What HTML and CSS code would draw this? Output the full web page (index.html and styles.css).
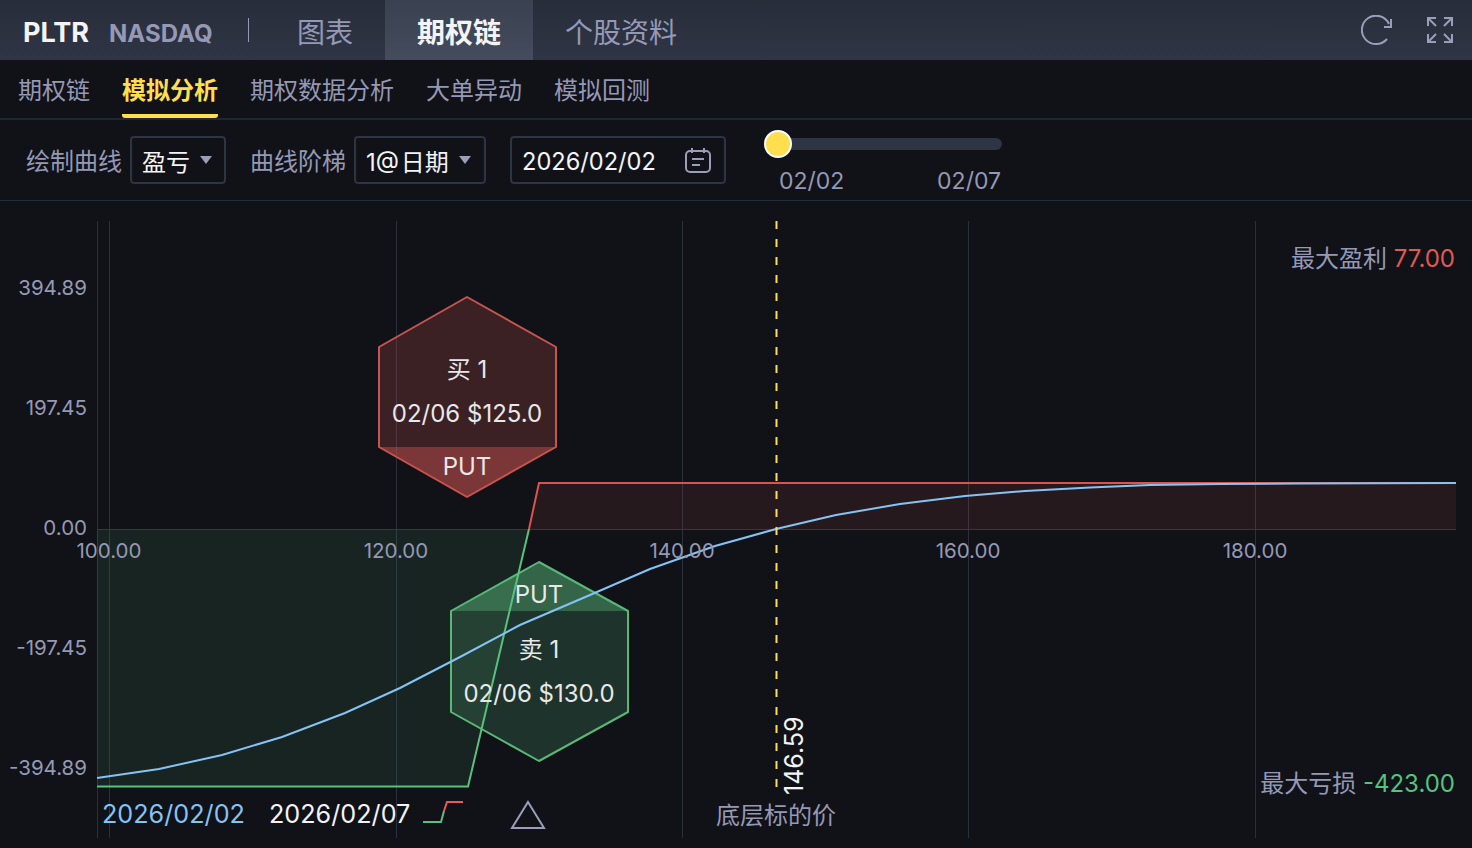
FILE: index.html
```html
<!doctype html>
<html lang="zh">
  <head>
    <meta charset="UTF-8" />
    <title>PLTR 模拟分析</title>
    <link rel="stylesheet" href="styles.css">
  </head>
  <body>
    <header class="topbar">
      <div class="brand">
        <span class="ticker">PLTR</span>
        <span class="market">NASDAQ</span>
      </div>
      <span class="divider"></span>
      <nav class="tabs">
        <a class="tab">图表</a>
        <a class="tab active">期权链</a>
        <a class="tab">个股资料</a>
      </nav>
      <div class="top-icons">
        <svg class="icon-refresh" width="32" height="32" viewBox="0 0 32 32">
          <path d="M26 24A14.2 14.2 0 1 1 28 9" />
          <path d="M30 4V12H23" />
        </svg>
        <svg class="icon-full" width="28" height="28" viewBox="0 0 28 28">
          <path d="M2 10V2H10M2 2L10 10" />
          <path d="M26 10V2H18M26 2L18 10" />
          <path d="M2 18V26H10M2 26L10 18" />
          <path d="M26 18V26H18M26 26L18 18" />
        </svg>
      </div>
    </header>

    <nav class="subnav">
      <a class="subtab">期权链</a>
      <a class="subtab active">模拟分析</a>
      <a class="subtab">期权数据分析</a>
      <a class="subtab">大单异动</a>
      <a class="subtab">模拟回测</a>
    </nav>

    <section class="toolbar">
      <label class="field-label">绘制曲线</label>
      <div class="select select-kind">盈亏<span class="caret"></span></div>
      <label class="field-label label-step">曲线阶梯</label>
      <div class="select select-step">1@ 日期<span class="caret"></span></div>
      <div class="select date-box">
        <span class="date-value">2026/02/02</span>
        <svg width="28" height="26" viewBox="0 0 28 26">
          <rect x="2" y="4" width="24" height="21" rx="4" />
          <path d="M8 1V6M20 1V6M8 12H20M8 18H16" />
        </svg>
      </div>
      <div class="slider">
        <div class="track"><span class="thumb"></span></div>
        <div class="slider-dates">
          <span>02/02</span>
          <span>02/07</span>
        </div>
      </div>
    </section>

    <svg class="chart" width="1472" height="647" viewBox="0 201 1472 647">
      <g class="grid">
        <path d="M97.500 221V838M109.500 221V838M396.500 221V838M682.500 221V838M968.500 221V838M1255.500 221V838" />
      </g>
      <path class="area-green" d="M97 529H529L468 786H97Z" />
      <path class="area-red" d="M529 529L539 483H1456V529Z" />
      <path class="zero" d="M97 529.500H1456" />

      <polygon class="hex-red" points="467,297 556,347 556,447 467,497 379,447 379,347" />
      <polygon class="cap-red" points="379,447 556,447 467,497" />
      <polygon class="hex-green" points="539,562 628,611 628,712 539,761 451,712 451,611" />
      <polygon class="cap-green" points="539,562 628,611 451,611" />

      <path class="line-green" d="M97 786.500H468L529 529" />
      <path class="line-red" d="M529 529L539 483H1456" />
      <path class="line-blue" d="M97 778L159 769L222 755L282 737L345 713L400 688L460 657L520 625L590 595L650 569L715 546L776 529L836 515L900 504L965 496L1025 491L1090 487.500L1150 485L1220 484L1300 483.500L1456 483" />
      <path class="price-line" d="M776.500 221V790" />

      <g class="axis-y">
        <text x="87" y="295">394.89</text>
        <text x="87" y="415">197.45</text>
        <text x="87" y="535">0.00</text>
        <text x="87" y="655">-197.45</text>
        <text x="87" y="775">-394.89</text>
      </g>
      <g class="axis-x">
        <text x="109" y="558">100.00</text>
        <text x="396" y="558">120.00</text>
        <text x="682" y="558">140.00</text>
        <text x="968" y="558">160.00</text>
        <text x="1255" y="558">180.00</text>
      </g>

      <g class="hex-text">
        <text x="467" y="378">买 1</text>
        <text x="467" y="422">02/06 $125.0</text>
        <text x="467" y="475">PUT</text>
        <text x="539" y="603">PUT</text>
        <text x="539" y="658">卖 1</text>
        <text x="539" y="702">02/06 $130.0</text>
      </g>

      <text class="stat" x="1455" y="267">最大盈利 <tspan class="red">77.00</tspan></text>
      <text class="stat" x="1455" y="792">最大亏损 <tspan class="green">-423.00</tspan></text>

      <text class="price-value" transform="translate(803 795) rotate(-90)">146.59</text>
      <text class="price-name" x="776" y="824">底层标的价</text>

      <text class="legend legend-blue" x="102" y="823">2026/02/02</text>
      <text class="legend" x="269" y="823">2026/02/07</text>
      <path class="key-green" d="M423 822H441L444 811" />
      <path class="key-red" d="M444 811L447 802H463" />
      <path class="key-triangle" d="M528 802L544 828H512Z" />
    </svg>
  </body>
</html>
```

FILE: styles.css
```css
* {
  box-sizing: border-box;
}
body {
  margin: 0;
  width: 1472px;
  height: 848px;
  overflow: hidden;
  background: #101218;
  color: #9599b5;
  font-family: Inter, "Noto Sans CJK SC", sans-serif;
}

.topbar {
  display: flex;
  align-items: center;
  height: 60px;
  background: linear-gradient(180deg, #282d3a, #2f3545);
}
.brand {
  display: flex;
  align-items: baseline;
  gap: 20px;
  width: 248px;
  padding-top: 4px;
  padding-left: 23px;
  font-weight: 700;
}
.ticker {
  color: #f4f4f6;
  font-size: 27px;
}
.market {
  font-size: 24px;
}
.divider {
  width: 1px;
  height: 24px;
  margin-right: 16px;
  background: #9599b5;
}
.tabs {
  display: flex;
  height: 100%;
}
.tab {
  display: flex;
  align-items: center;
  padding: 2px 32px 0;
  font-size: 28px;
}
.tab.active {
  background: linear-gradient(180deg, #3a4150, #444c5d);
  color: #f4f4f6;
  font-weight: 700;
}
.top-icons {
  display: flex;
  align-items: center;
  gap: 33px;
  margin-left: auto;
  margin-right: 18px;
}
.top-icons svg {
  fill: none;
  stroke: #9a9eb8;
  stroke-width: 2;
}
.icon-refresh {
  margin-top: 2px;
}
.icon-full {
  margin-top: -1px;
}

.subnav {
  display: flex;
  gap: 32px;
  height: 60px;
  padding-left: 18px;
  border-bottom: 2px solid #1e2630;
}
.subtab {
  height: 58px;
  padding-top: 14px;
  font-size: 24px;
  line-height: 34px;
}
.subtab.active {
  color: #ffdf4d;
  font-weight: 700;
  border-bottom: 4px solid #ffdf4d;
  border-radius: 0 0 3px 3px;
}

.toolbar {
  display: flex;
  align-items: center;
  height: 81px;
  padding-left: 26px;
  border-bottom: 1px solid #252d39;
}
.field-label {
  margin-top: -2px;
  font-size: 24px;
}
.select {
  display: flex;
  align-items: center;
  height: 48px;
  padding-left: 10px;
  border: 2px solid #2d3442;
  border-radius: 4px;
  color: #f4f4f6;
  font-size: 24px;
}
.select-kind {
  width: 96px;
  margin-left: 8px;
}
.label-step {
  margin-left: 24px;
}
.select-step {
  width: 132px;
  margin-left: 8px;
  word-spacing: -5px;
}
.caret {
  width: 0;
  height: 0;
  margin-left: 10px;
  border-left: 6.500px solid transparent;
  border-right: 6.500px solid transparent;
  border-top: 8px solid #9a9eb8;
}
.date-box {
  justify-content: space-between;
  width: 216px;
  margin-left: 24px;
  padding-right: 12px;
  font-size: 23.600px;
}
.date-value {
  padding-top: 2px;
}
.date-box svg {
  fill: none;
  stroke: #9a9eb8;
  stroke-width: 2;
}
.slider {
  align-self: flex-start;
  width: 238px;
  margin-left: 38px;
  padding-top: 18px;
}
.track {
  position: relative;
  height: 12px;
  margin-left: 14px;
  border-radius: 6px;
  background: #2d3444;
}
.thumb {
  position: absolute;
  left: -14px;
  top: -8px;
  width: 28px;
  height: 28px;
  border: 2px solid #fff;
  border-radius: 50%;
  background: #ffdf4d;
}
.slider-dates {
  display: flex;
  justify-content: space-between;
  padding: 15px 1px 0 15px;
  font-size: 23px;
  line-height: 32px;
}

.chart {
  display: block;
}
.chart text {
  font-family: Inter, "Noto Sans CJK SC", sans-serif;
}
.grid path {
  fill: none;
  stroke: #2a303b;
}
.zero {
  fill: none;
  stroke: #343a44;
}
.area-green {
  fill: rgba(89, 184, 120, 0.11);
}
.area-red {
  fill: rgba(217, 83, 79, 0.11);
}
.hex-red {
  fill: rgba(201, 84, 79, 0.23);
  stroke: #c9544f;
  stroke-width: 2;
  stroke-linejoin: round;
}
.cap-red {
  fill: rgba(201, 84, 79, 0.45);
}
.hex-green {
  fill: rgba(89, 184, 120, 0.2);
  stroke: #59b878;
  stroke-width: 2;
  stroke-linejoin: round;
}
.cap-green {
  fill: rgba(89, 184, 120, 0.38);
}
.line-green,
.line-red,
.line-blue {
  fill: none;
  stroke-width: 2;
}
.line-green {
  stroke: #59c17e;
}
.line-red {
  stroke: #d9534f;
}
.line-blue {
  stroke: #85c3f5;
}
.price-line {
  fill: none;
  stroke: #ffdf4d;
  stroke-width: 2;
  stroke-dasharray: 8 10;
}
.axis-y text {
  fill: #9599b5;
  font-size: 20.500px;
  text-anchor: end;
}
.axis-x text {
  fill: #9599b5;
  font-size: 20.500px;
  text-anchor: middle;
}
.hex-text text {
  fill: #e8e8e8;
  font-size: 24px;
  text-anchor: middle;
}
.stat {
  fill: #9599b5;
  font-size: 24px;
  text-anchor: end;
}
.stat .red {
  fill: #e05a52;
}
.stat .green {
  fill: #55c27e;
}
.price-value {
  fill: #f4f4f6;
  font-size: 25px;
}
.price-name {
  fill: #9599b5;
  font-size: 24px;
  text-anchor: middle;
}
.legend {
  fill: #f4f4f6;
  font-size: 25.200px;
}
.legend-blue {
  fill: #85c3f5;
}
.key-green,
.key-red {
  fill: none;
  stroke-width: 2;
}
.key-green {
  stroke: #59c17e;
}
.key-red {
  stroke: #e85a55;
}
.key-triangle {
  fill: none;
  stroke: #9a9eb8;
  stroke-width: 2;
}
```
